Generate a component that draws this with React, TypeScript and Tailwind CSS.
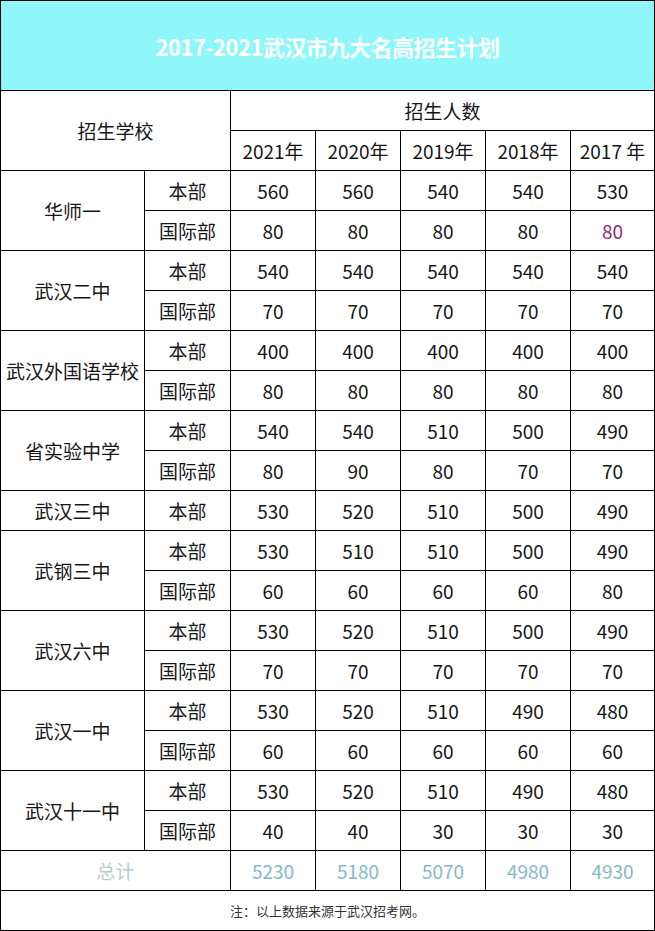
import React from "react";

type School = { name: string; rows: { dept: string; vals: (number | [number, string])[] }[] };

const schools: School[] = [
  { name: "华师一", rows: [ { dept: "本部", vals: [560, 560, 540, 540, 530] }, { dept: "国际部", vals: [80, 80, 80, 80, [80, "#8a2d6e"]] } ] },
  { name: "武汉二中", rows: [ { dept: "本部", vals: [540, 540, 540, 540, 540] }, { dept: "国际部", vals: [70, 70, 70, 70, 70] } ] },
  { name: "武汉外国语学校", rows: [ { dept: "本部", vals: [400, 400, 400, 400, 400] }, { dept: "国际部", vals: [80, 80, 80, 80, 80] } ] },
  { name: "省实验中学", rows: [ { dept: "本部", vals: [540, 540, 510, 500, 490] }, { dept: "国际部", vals: [80, 90, 80, 70, 70] } ] },
  { name: "武汉三中", rows: [ { dept: "本部", vals: [530, 520, 510, 500, 490] } ] },
  { name: "武钢三中", rows: [ { dept: "本部", vals: [530, 510, 510, 500, 490] }, { dept: "国际部", vals: [60, 60, 60, 60, 80] } ] },
  { name: "武汉六中", rows: [ { dept: "本部", vals: [530, 520, 510, 500, 490] }, { dept: "国际部", vals: [70, 70, 70, 70, 70] } ] },
  { name: "武汉一中", rows: [ { dept: "本部", vals: [530, 520, 510, 490, 480] }, { dept: "国际部", vals: [60, 60, 60, 60, 60] } ] },
  { name: "武汉十一中", rows: [ { dept: "本部", vals: [530, 520, 510, 490, 480] }, { dept: "国际部", vals: [40, 40, 30, 30, 30] } ] },
];

const years = ["2021年", "2020年", "2019年", "2018年", "2017 年"];
const totals = [5230, 5180, 5070, 4980, 4930];

const cell = "bg-white flex items-center justify-center";

export default function App() {
  return (
    <div
      className="w-[655px] h-[931px] bg-black p-px grid gap-px grid-cols-[143px_85px_84px_84px_84px_84px_83px] grid-rows-[89px_repeat(21,39px)] text-[19px] text-[#161616] leading-none"
      style={{ fontFamily: '"Noto Sans CJK SC", "Noto Sans", sans-serif' }}
    >
      <div className="col-span-7 bg-[#8ff7fa] flex items-center justify-center text-white font-bold text-[22px] tracking-[-0.5px]">
        2017-2021武汉市九大名高招生计划
      </div>
      <div className={`${cell} col-span-2 row-span-2`}>招生学校</div>
      <div className={`${cell} col-span-5`}>招生人数</div>
      {years.map((y) => (
        <div key={y} className={cell}>{y}</div>
      ))}
      {schools.map((s) => (
        <React.Fragment key={s.name}>
          <div className={`${cell} ${s.rows.length === 2 ? "row-span-2" : ""} whitespace-nowrap`}>{s.name}</div>
          {s.rows.map((r, ri) => (
            <React.Fragment key={ri}>
              <div className={cell}>{r.dept}</div>
              {r.vals.map((v, vi) => {
                const [num, color] = Array.isArray(v) ? v : [v, undefined];
                return (
                  <div key={vi} className={cell} style={color ? { color } : undefined}>
                    {num}
                  </div>
                );
              })}
            </React.Fragment>
          ))}
        </React.Fragment>
      ))}
      <div className={`${cell} col-span-2 text-[#b9cccc]`}>总计</div>
      {totals.map((t) => (
        <div key={t} className={`${cell} text-[#86b8c8]`}>{t}</div>
      ))}
      <div className={`${cell} col-span-7 text-[13px] text-[#333]`}>注：以上数据来源于武汉招考网。</div>
    </div>
  );
}
